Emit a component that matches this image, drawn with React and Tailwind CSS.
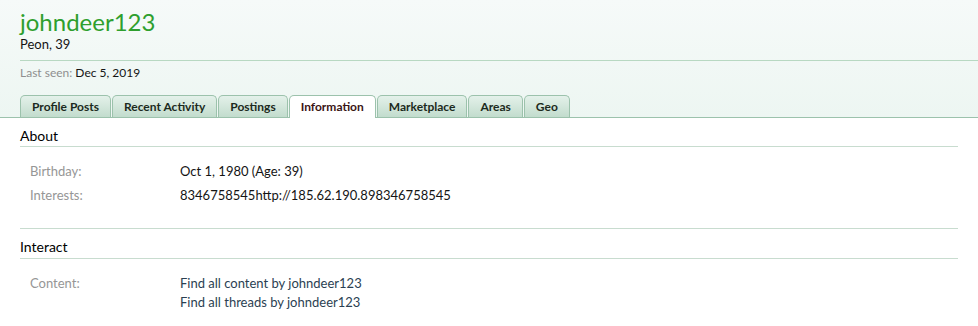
export default function App() {
  const tabs = ["Profile Posts", "Recent Activity", "Postings", "Information", "Marketplace", "Areas", "Geo"];
  return (
    <div className="w-[978px] h-[326px] bg-white font-['Lato','Liberation_Sans',sans-serif] text-[#141414] overflow-hidden">
      <div className="bg-gradient-to-b from-[#f6faf9] to-[#edf6f2] border-b border-[#9cc2ac] pt-[8px]">
        <div className="pl-5">
          <h1 className="text-[24px] leading-[28px] text-[#2e9f2e]">johndeer123</h1>
          <div className="text-[13px] leading-[16px]">Peon, 39</div>
          <div className="mt-[8px] border-t border-[#b8d8c2] pt-[5px] text-[12px] leading-[14px]">
            <span className="text-[#8f8f8f]">Last seen: </span>
            <span>Dec 5, 2019</span>
          </div>
          <div className="mt-[15px] flex gap-px">
            {tabs.map((t) =>
              t === "Information" ? (
                <div key={t} className="h-[23px] -mb-px px-[11px] flex items-center rounded-t-[5px] border border-b-0 border-[#9cc2ac] bg-white text-[12px] font-bold text-[#3a1414]">
                  {t}
                </div>
              ) : (
                <div key={t} className="h-[22px] px-[11px] flex items-center rounded-t-[5px] border border-b-0 border-[#9cc2ac] bg-gradient-to-b from-[#e4f1ea] to-[#c2dccd] text-[12px] font-bold text-[#1c2a20]">
                  {t}
                </div>
              )
            )}
          </div>
        </div>
      </div>
      <div className="px-5">
        <div className="pt-[9px] pb-[1px] border-b border-[#c8dccf] text-[14px] leading-[18px] text-black">About</div>
        <div className="pl-[10px] pt-[15px] pb-[24px] border-b border-[#c8dccf] text-[13px] flex flex-col gap-[6px]">
          <div className="flex leading-[18px]">
            <div className="w-[150px] text-[#969696]">Birthday:</div>
            <div>Oct 1, 1980 (Age: 39)</div>
          </div>
          <div className="flex leading-[18px]">
            <div className="w-[150px] text-[#969696]">Interests:</div>
            <div>8346758545http://185.62.190.898346758545</div>
          </div>
        </div>
        <div className="pt-[9px] pb-[2px] border-b border-[#c8dccf] text-[14px] leading-[18px] text-black">Interact</div>
        <div className="pl-[10px] pt-[15px] text-[13px] flex">
          <div className="w-[150px] text-[#969696] leading-[19px]">Content:</div>
          <div className="flex flex-col text-[#2b3f52] leading-[19px]">
            <span>Find all content by johndeer123</span>
            <span>Find all threads by johndeer123</span>
          </div>
        </div>
      </div>
    </div>
  );
}
